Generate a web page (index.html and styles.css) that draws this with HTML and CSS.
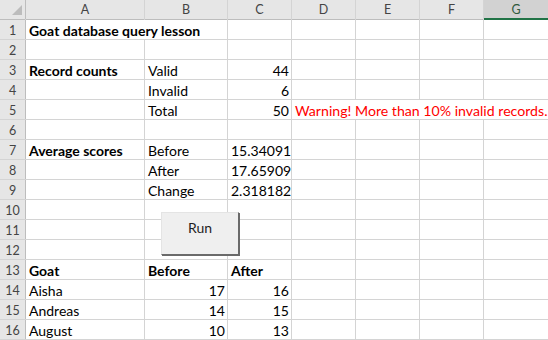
FILE: index.html
```html
<!DOCTYPE html>
<html>
<head>
<meta charset="utf-8">
<link rel="stylesheet" href="styles.css">
</head>
<body>
<div class="sheet">
  <div class="hd corner"><svg width="25" height="19" viewBox="0 0 25 19"><polygon points="22,5 22,15 12,15" fill="#bcbcbc"/></svg></div>
  <div class="hd col">A</div><div class="hd col">B</div><div class="hd col">C</div><div class="hd col">D</div><div class="hd col">E</div><div class="hd col">F</div><div class="hd col sel">G</div>

  <div class="hd row">1</div><div class="c b span2">Goat database query lesson</div><div class="c"></div><div class="c"></div><div class="c"></div><div class="c"></div><div class="c"></div>
  <div class="hd row">2</div><div class="c"></div><div class="c"></div><div class="c"></div><div class="c"></div><div class="c"></div><div class="c"></div><div class="c"></div>
  <div class="hd row">3</div><div class="c b">Record counts</div><div class="c">Valid</div><div class="c r">44</div><div class="c"></div><div class="c"></div><div class="c"></div><div class="c"></div>
  <div class="hd row">4</div><div class="c"></div><div class="c">Invalid</div><div class="c r">6</div><div class="c"></div><div class="c"></div><div class="c"></div><div class="c"></div>
  <div class="hd row">5</div><div class="c"></div><div class="c">Total</div><div class="c r">50</div><div class="c warn span4">Warning! More than 10% invalid records.</div>
  <div class="hd row">6</div><div class="c"></div><div class="c"></div><div class="c"></div><div class="c"></div><div class="c"></div><div class="c"></div><div class="c"></div>
  <div class="hd row">7</div><div class="c b">Average scores</div><div class="c">Before</div><div class="c r">15.34091</div><div class="c"></div><div class="c"></div><div class="c"></div><div class="c"></div>
  <div class="hd row">8</div><div class="c"></div><div class="c">After</div><div class="c r">17.65909</div><div class="c"></div><div class="c"></div><div class="c"></div><div class="c"></div>
  <div class="hd row">9</div><div class="c"></div><div class="c">Change</div><div class="c r">2.318182</div><div class="c"></div><div class="c"></div><div class="c"></div><div class="c"></div>
  <div class="hd row">10</div><div class="c"></div><div class="c"></div><div class="c"></div><div class="c"></div><div class="c"></div><div class="c"></div><div class="c"></div>
  <div class="hd row">11</div><div class="c"></div><div class="c"></div><div class="c"></div><div class="c"></div><div class="c"></div><div class="c"></div><div class="c"></div>
  <div class="hd row">12</div><div class="c"></div><div class="c"></div><div class="c"></div><div class="c"></div><div class="c"></div><div class="c"></div><div class="c"></div>
  <div class="hd row">13</div><div class="c b">Goat</div><div class="c b">Before</div><div class="c b">After</div><div class="c"></div><div class="c"></div><div class="c"></div><div class="c"></div>
  <div class="hd row">14</div><div class="c">Aisha</div><div class="c r">17</div><div class="c r">16</div><div class="c"></div><div class="c"></div><div class="c"></div><div class="c"></div>
  <div class="hd row">15</div><div class="c">Andreas</div><div class="c r">14</div><div class="c r">15</div><div class="c"></div><div class="c"></div><div class="c"></div><div class="c"></div>
  <div class="hd row">16</div><div class="c">August</div><div class="c r">10</div><div class="c r">13</div><div class="c"></div><div class="c"></div><div class="c"></div><div class="c"></div>

  <button class="run" type="button">Run</button>
</div>
</body>
</html>
```
FILE: styles.css
```css
html, body {
  margin: 0;
  padding: 0;
  background: #ffffff;
  overflow: hidden;
}
.sheet {
  position: relative;
  width: 548px;
  height: 340px;
  display: grid;
  grid-template-columns: 25px 118px 82px 63px 63px 63px 63px 64px;
  grid-template-rows: repeat(17, 19px);
  gap: 1px;
  padding-bottom: 1px;
  box-sizing: border-box;
  background: #d4d4d4;
  font-family: "Lato", "Liberation Sans", sans-serif;
  font-size: 14px;
  color: #000;
}
.hd {
  background: #e6e6e6;
  color: #444;
  font-size: 12.5px;
  text-align: center;
  overflow: hidden;
}
.col {
  line-height: 19px;
  box-shadow: 0 1px 0 #bdbdbd;
}
.col.sel {
  background: #d2d2d2;
  color: #2f5a3e;
  box-shadow: inset 0 -1px 0 #217346, 0 1px 0 #217346;
}
.corner {
  box-shadow: 0 1px 0 #bdbdbd, 1px 0 0 #bdbdbd;
}
.corner svg { display: block; }
.row {
  line-height: 21px;
  box-shadow: 1px 0 0 #bdbdbd;
}
.c {
  background: #ffffff;
  line-height: 21px;
  padding: 0 2px 0 3px;
  white-space: nowrap;
  overflow: visible;
}
.b { font-weight: 700; }
.r { text-align: right; }
.span2 { grid-column: span 2; }
.span4 { grid-column: span 4; }
.warn { color: #ff0000; font-size: 14.15px; }
.run {
  position: absolute;
  left: 161px;
  top: 212px;
  width: 78px;
  height: 43px;
  box-sizing: border-box;
  margin: 0;
  padding: 0 0 12px 0;
  background: #efefef;
  border: 1px solid;
  border-color: #e4e4e4 #6a6a6a #6a6a6a #e4e4e4;
  box-shadow: 1px 1px 0 #6a6a6a;
  font-family: "Lato", "Liberation Sans", sans-serif;
  font-size: 14px;
  color: #1e1e1e;
}
```
